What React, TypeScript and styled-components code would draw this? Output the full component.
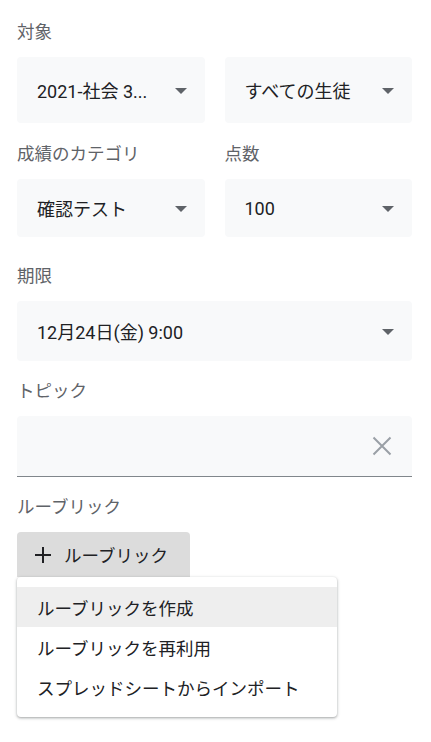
import React from "react";
import styled, { createGlobalStyle } from "styled-components";

const GlobalStyle = createGlobalStyle`
  html, body { margin: 0; padding: 0; background: #ffffff; }
  body {
    font-family: Roboto, "Noto Sans CJK JP", "Noto Sans", sans-serif;
    -webkit-font-smoothing: antialiased;
  }
`;

const Page = styled.div`
  width: 431px;
  min-height: 742px;
  box-sizing: border-box;
  padding: 0 19px 0 17px;
  display: flex;
  flex-direction: column;
`;

const Section = styled.section<{ $top: number }>`
  margin-top: ${(p) => p.$top}px;
  display: flex;
  flex-direction: column;
`;

const Label = styled.div`
  font-size: 17.5px;
  line-height: 24px;
  color: #5f6368;
  margin-bottom: 13px;
`;

const Row = styled.div`
  display: grid;
  grid-template-columns: 1fr 1fr;
  column-gap: 20px;
`;

const Field = styled.div<{ $h: number; $underline?: boolean }>`
  height: ${(p) => p.$h}px;
  box-sizing: border-box;
  background: #f8f9fa;
  border-radius: ${(p) => (p.$underline ? "4px 4px 0 0" : "4px")};
  border-bottom: ${(p) => (p.$underline ? "1px solid #80868b" : "none")};
  display: flex;
  align-items: center;
  padding: 0 12px 0 20px;
`;

const Value = styled.span`
  flex: 1;
  font-size: 18px;
  color: #202124;
  white-space: nowrap;
  overflow: hidden;
`;

const IconSlot = styled.span`
  width: 24px;
  height: 24px;
  display: flex;
  align-items: center;
  justify-content: center;
  color: #5f6368;
`;

const ClearSlot = styled.span`
  width: 24px;
  height: 24px;
  margin-right: 6px;
  display: flex;
  align-items: center;
  justify-content: center;
  color: #9aa0a6;
`;

const MenuAnchor = styled.div`
  position: relative;
  align-self: flex-start;
`;

const AddButton = styled.button`
  width: 173px;
  height: 45px;
  border: none;
  border-radius: 4px 4px 0 0;
  background: #dcdcdc;
  display: flex;
  align-items: center;
  gap: 12px;
  padding: 0 0 0 17px;
  font-family: inherit;
  font-size: 17.5px;
  color: #202124;
`;

const Menu = styled.ul`
  position: absolute;
  left: 0;
  top: 45px;
  width: 320px;
  margin: 0;
  padding: 10px 0;
  list-style: none;
  background: #ffffff;
  border-radius: 4px;
  box-shadow: 0 1px 2px rgba(60, 64, 67, 0.3), 0 1px 3px 1px rgba(60, 64, 67, 0.15);
  z-index: 2;
`;

const MenuItem = styled.li<{ $active?: boolean }>`
  height: 40px;
  display: flex;
  align-items: center;
  padding: 0 20px;
  font-size: 17.5px;
  color: #202124;
  background: ${(p) => (p.$active ? "#eeeeee" : "transparent")};
`;

const DropArrow = () => (
  <IconSlot>
    <svg width="24" height="24" viewBox="0 0 24 24">
      <path d="M6 10l6 6 6-6z" fill="currentColor" />
    </svg>
  </IconSlot>
);

const ClearIcon = () => (
  <ClearSlot>
    <svg width="20" height="20" viewBox="0 0 20 20">
      <path d="M1.5 1.5L18.5 18.5M18.5 1.5L1.5 18.5" stroke="currentColor" strokeWidth="2" fill="none" />
    </svg>
  </ClearSlot>
);

const PlusIcon = () => (
  <svg width="18" height="18" viewBox="0 0 18 18">
    <path d="M9 1v16M1 9h16" stroke="#202124" strokeWidth="2" fill="none" />
  </svg>
);

export default function App() {
  return (
    <>
      <GlobalStyle />
      <Page>
        <Section $top={20}>
          <Label>対象</Label>
          <Row>
            <Field $h={66}>
              <Value>2021-社会 3...</Value>
              <DropArrow />
            </Field>
            <Field $h={66}>
              <Value>すべての生徒</Value>
              <DropArrow />
            </Field>
          </Row>
        </Section>

        <Section $top={19}>
          <Row>
            <div>
              <Label>成績のカテゴリ</Label>
              <Field $h={58}>
                <Value>確認テスト</Value>
                <DropArrow />
              </Field>
            </div>
            <div>
              <Label>点数</Label>
              <Field $h={58}>
                <Value>100</Value>
                <DropArrow />
              </Field>
            </div>
          </Row>
        </Section>

        <Section $top={27}>
          <Label>期限</Label>
          <Field $h={60}>
            <Value>12月24日(金) 9:00</Value>
            <DropArrow />
          </Field>
        </Section>

        <Section $top={18}>
          <Label>トピック</Label>
          <Field $h={61} $underline>
            <Value />
            <ClearIcon />
          </Field>
        </Section>

        <Section $top={18}>
          <Label>ルーブリック</Label>
          <MenuAnchor>
            <AddButton>
              <PlusIcon />
              ルーブリック
            </AddButton>
            <Menu>
              <MenuItem $active>ルーブリックを作成</MenuItem>
              <MenuItem>ルーブリックを再利用</MenuItem>
              <MenuItem>スプレッドシートからインポート</MenuItem>
            </Menu>
          </MenuAnchor>
        </Section>
      </Page>
    </>
  );
}
